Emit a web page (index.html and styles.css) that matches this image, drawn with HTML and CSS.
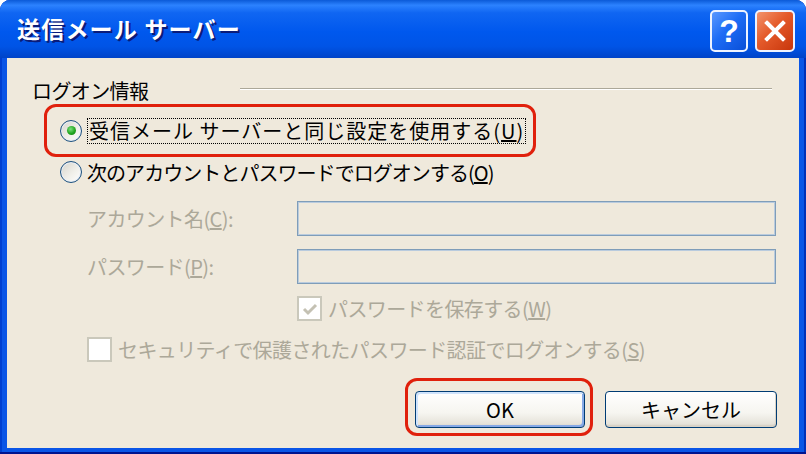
FILE: index.html
```html
<!DOCTYPE html>
<html lang="ja">
<head>
  <meta charset="utf-8" />
  <title>送信メール サーバー</title>
  <link rel="stylesheet" href="styles.css">
</head>
<body>
  <div class="window">
    <div class="titlebar">
      <span class="title">送信メール サーバー</span>
      <div class="caption-buttons">
        <span class="cap-btn help">?</span>
        <span class="cap-btn close">
          <svg width="22" height="22" viewBox="0 0 22 22"><path d="M3 3L19 19M19 3L3 19" stroke="#fff" stroke-width="4" stroke-linecap="square"/></svg>
        </span>
      </div>
    </div>

    <div class="client">
      <div class="group-head">
        <span class="group-label">ログオン情報</span>
        <span class="rule"></span>
      </div>

      <!-- highlighted option -->
      <div class="mark mark-radio">
        <label class="option">
          <span class="radio checked"></span>
          <span class="focus">受信メール サーバーと同じ設定を使用する(<u>U</u>)</span>
        </label>
      </div>

      <label class="option indent-radio">
        <span class="radio"></span>
        <span class="tight">次のアカウントとパスワードでログオンする(<u>O</u>)</span>
      </label>

      <div class="field first">
        <span class="field-label">アカウント名(<u>C</u>):</span>
        <span class="textbox"></span>
      </div>
      <div class="field">
        <span class="field-label">パスワード(<u>P</u>):</span>
        <span class="textbox"></span>
      </div>

      <label class="option disabled check-save">
        <span class="check">
          <svg width="16" height="16" viewBox="0 0 16 16"><path d="M2 8l4 4 8-8" fill="none" stroke="#c4c1b3" stroke-width="3"/></svg>
        </span>
        <span>パスワードを保存する(<u>W</u>)</span>
      </label>

      <label class="option disabled check-spa">
        <span class="check"></span>
        <span>セキュリティで保護されたパスワード認証でログオンする(<u>S</u>)</span>
      </label>

      <div class="buttons">
        <div class="mark mark-ok">
          <button class="btn default">OK</button>
        </div>
        <button class="btn cancel">キャンセル</button>
      </div>
    </div>
  </div>
</body>
</html>
```

FILE: styles.css
```css
body {
  margin: 0;
  background: #ffffff;
  font-family: "Noto Sans CJK JP", sans-serif;
}
.window {
  width: 806px;
  height: 454px;
  box-sizing: border-box;
  display: flex;
  flex-direction: column;
  background: #0a55e6;
  border-radius: 10px 10px 0 0;
  box-shadow: inset 0 -2px #00138f, inset 2px 0 #003fd0, inset -2px 0 #0030b8;
  overflow: hidden;
}
.titlebar {
  height: 58px;
  flex-shrink: 0;
  display: flex;
  align-items: center;
  padding: 0 11px 0 17px;
  background: linear-gradient(to bottom, #0b5ad8 0%, #2c82ff 9%, #1066f2 22%, #0058ee 55%, #0054e6 80%, #0043c8 100%);
}
.title {
  flex: 1;
  color: #ffffff;
  font-size: 23px;
  font-weight: bold;
  letter-spacing: 1.2px;
  text-shadow: 2px 2px 0 #0a1c7a;
  padding-bottom: 2px;
}
.caption-buttons {
  display: flex;
  gap: 7px;
  padding-top: 4px;
}
.cap-btn {
  box-sizing: border-box;
  height: 42px;
  border: 2px solid #eef3ff;
  border-radius: 5px;
  display: flex;
  align-items: center;
  justify-content: center;
}
.help {
  width: 38px;
  background: linear-gradient(135deg, #5a98ff 0%, #1d6cf5 45%, #0a4fd8 100%);
  color: #ffffff;
  font-family: "Liberation Sans", sans-serif;
  font-weight: bold;
  font-size: 32px;
}
.close {
  width: 40px;
  background: linear-gradient(135deg, #f3946c 0%, #e45a2a 45%, #c8360c 100%);
}
.client {
  flex: 1;
  margin: 0 7px 6px;
  background: #efe9dc;
  font-size: 20px;
  color: #000000;
}
.group-head {
  display: flex;
  align-items: center;
  height: 24px;
  margin-top: 20px;
}
.group-label {
  margin-left: 25px;
  letter-spacing: -0.6px;
}
.rule {
  width: 532px;
  margin-left: auto;
  margin-right: 27px;
  border-top: 1px solid #aca899;
  border-bottom: 1px solid #ffffff;
  margin-top: -2px;
}
.mark {
  box-sizing: border-box;
  border: 3px solid #e0200c;
  border-radius: 12px;
}
.mark-radio {
  width: 492px;
  height: 53px;
  margin: 2px 0 0 37px;
  display: flex;
  align-items: center;
  padding-left: 13px;
}
.option {
  display: flex;
  align-items: center;
  white-space: nowrap;
  letter-spacing: -0.6px;
}
.indent-radio {
  height: 30px;
  padding-left: 53px;
}
.radio {
  box-sizing: border-box;
  width: 22px;
  height: 22px;
  border: 1px solid #1c5180;
  border-radius: 50%;
  background: linear-gradient(135deg, #d6d4cb 0%, #f0efe9 55%, #ffffff 100%);
  box-shadow: inset 0 0 0 1px #e8eef6;
  margin-right: 5px;
  display: flex;
  align-items: center;
  justify-content: center;
  flex-shrink: 0;
}
.radio.checked::after {
  content: "";
  width: 9px;
  height: 9px;
  border-radius: 50%;
  background: radial-gradient(circle at 40% 35%, #7de07d 0%, #21a621 55%, #0f7a0f 100%);
}
.focus {
  border: 1px dotted #000000;
  padding: 0 1px;
  line-height: 24px;
  letter-spacing: 1px;
}
.tight {
  letter-spacing: -0.95px;
}
.field {
  display: flex;
  align-items: center;
  height: 35px;
  margin-top: 13px;
}
.field.first {
  margin-top: 14px;
}
.field-label {
  box-sizing: border-box;
  width: 290px;
  padding-left: 80px;
  color: #aca899;
  letter-spacing: -0.6px;
}
.textbox {
  box-sizing: border-box;
  width: 479px;
  height: 35px;
  border: 1px solid #7f9db9;
  box-shadow: inset 0 0 0 1px #b9cbde;
}
.disabled {
  color: #aca899;
}
.check {
  box-sizing: border-box;
  width: 25px;
  height: 25px;
  border: 2px solid #cac8bb;
  background: #ffffff;
  display: flex;
  align-items: center;
  justify-content: center;
  flex-shrink: 0;
  margin-right: 6px;
}
.check-save {
  height: 25px;
  margin-top: 12px;
  padding-left: 290px;
}
.check-spa {
  height: 25px;
  margin-top: 16px;
  padding-left: 80px;
}
.buttons {
  display: flex;
  justify-content: flex-end;
  align-items: flex-start;
  margin-top: 16px;
  padding-right: 22px;
}
.mark-ok {
  padding: 10px 5px 5px 7px;
}
.btn {
  box-sizing: border-box;
  height: 37px;
  border: 1px solid #003c74;
  border-radius: 4px;
  background: linear-gradient(to bottom, #ffffff 0%, #f6f5f0 60%, #e6e3da 90%, #d6d0c5 100%);
  font-family: "Noto Sans CJK JP", sans-serif;
  font-size: 20px;
  color: #000000;
  padding: 0;
}
.btn.default {
  width: 170px;
  box-shadow: inset 2px 2px #cfe3fc, inset -2px -2px #86a9e6;
}
.btn.cancel {
  width: 172px;
  margin-left: 12px;
  margin-top: 13px;
  box-shadow: inset -1px -2px #d8d2c6;
}
```
